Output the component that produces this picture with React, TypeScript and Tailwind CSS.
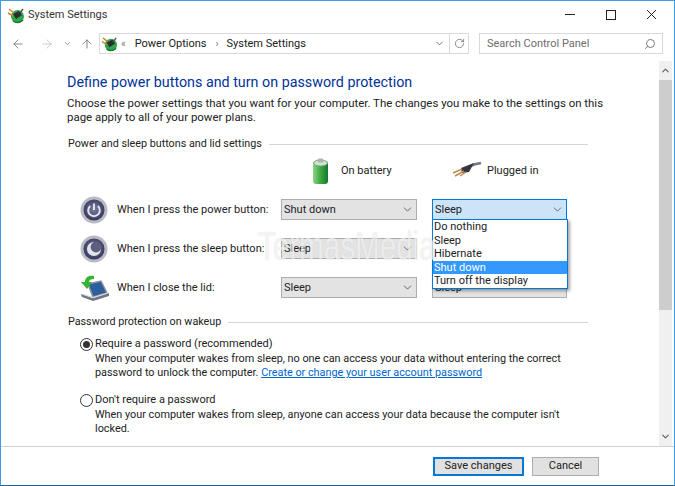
import { ChevronDown, Search, RotateCw, ArrowLeft, ArrowRight, ArrowUp } from 'lucide-react';

function PowerPlug({ size = 18 }: { size?: number }) {
  return (
    <svg width={size} height={size} viewBox="0 0 18 18" className="shrink-0">
      <circle cx="10.5" cy="10.5" r="6.5" fill="#2fa84a" />
      <path d="M6 8 L12 5 L15 9 L9 13 Z" fill="#2b2e33" />
      <path d="M2 3 L7 7 M1 7 L6 10" stroke="#c8873a" strokeWidth="1.5" />
      <path d="M13 7 L16 3" stroke="#555" strokeWidth="1.5" />
      <path d="M6 15 Q11 18.5 16 14" stroke="#157a30" strokeWidth="1.5" fill="none" />
    </svg>
  );
}

function RoundButton({ sleep }: { sleep?: boolean }) {
  return (
    <svg width="28" height="28" viewBox="0 0 28 28" className="shrink-0">
      <defs>
        <radialGradient id={sleep ? 'rg2' : 'rg1'} cx="50%" cy="45%" r="55%">
          <stop offset="0%" stopColor="#7d7fa0" />
          <stop offset="100%" stopColor="#34375e" />
        </radialGradient>
      </defs>
      <circle cx="14" cy="14" r="13.5" fill="#b9bac2" />
      <circle cx="14" cy="14" r="10.5" fill={`url(#${sleep ? 'rg2' : 'rg1'})`} />
      {sleep ? (
        <>
          <circle cx="14" cy="14" r="7" fill="#e4e5ec" />
          <circle cx="16" cy="12" r="5.4" fill="#5c5f80" />
        </>
      ) : (
        <>
          <path d="M10.2 10 A5.8 5.8 0 1 0 17.8 10" fill="none" stroke="#e3e4ea" strokeWidth="2" />
          <path d="M14 7.5 V14" stroke="#e3e4ea" strokeWidth="2" />
        </>
      )}
    </svg>
  );
}

function LidIcon() {
  return (
    <svg width="30" height="28" viewBox="0 0 30 28" className="shrink-0">
      <path d="M8 10 L21 7 L27 19 L13 23 Z" fill="#2d5f9c" stroke="#8a929c" strokeWidth="1.5" />
      <path d="M1 20 L13 24 L29 19 L29 22 L13 27 L2 23 Z" fill="#6f767f" />
      <path d="M2 20 L13 23.5 L28 19" stroke="#d5d8dc" strokeWidth="1.2" fill="none" />
      <path d="M14 2 C8 1 5 4 5 8 L1 8 L7 15 L12 8 L9 8 C9 6 11 5 14 5 Z" fill="#35b52f" />
    </svg>
  );
}

function Battery() {
  return (
    <svg width="17" height="27" viewBox="0 0 17 27" className="shrink-0">
      <defs>
        <linearGradient id="bat" x1="0" x2="1" y1="0" y2="0">
          <stop offset="0%" stopColor="#8fd48a" />
          <stop offset="45%" stopColor="#42ac45" />
          <stop offset="100%" stopColor="#13792c" />
        </linearGradient>
      </defs>
      <rect x="1" y="3" width="15" height="23" rx="3" fill="url(#bat)" />
      <ellipse cx="8.5" cy="5" rx="7" ry="3" fill="#cfe6cc" stroke="#87a587" />
      <rect x="5.5" y="0.5" width="6" height="4" rx="1.5" fill="#aab5ab" />
    </svg>
  );
}

function Plug() {
  return (
    <svg width="30" height="20" viewBox="0 0 30 20" className="shrink-0">
      <path d="M14 7 L22 3.5 L29 2" stroke="#74777c" strokeWidth="2.5" fill="none" />
      <path d="M9 7 L22 2 L17 11 L10 12 Z" fill="#33363b" />
      <path d="M10 8 L1 12 M12 10 L3 15 M14 11 L8 15" stroke="#bd8a52" strokeWidth="1.5" />
    </svg>
  );
}

function Select({ value, active }: { value: string; active?: boolean }) {
  return (
    <div
      className={
        active
          ? 'w-full h-[21px] border border-[#0078d7] bg-[#cce4f7] flex items-center justify-between pl-[2px] pr-[2px]'
          : 'w-full h-[21px] border border-[#adadad] bg-[#e3e3e3] flex items-center justify-between pl-[2px] pr-[2px]'
      }
    >
      <span>{value}</span>
      <ChevronDown size={13} strokeWidth={1.4} className="text-[#444]" />
    </div>
  );
}

const rows = [
  { label: 'When I press the power button:', icon: <RoundButton />, battery: 'Shut down', plugged: 'Sleep', active: true },
  { label: 'When I press the sleep button:', icon: <RoundButton sleep />, battery: 'Sleep', plugged: 'Sleep' },
  { label: 'When I close the lid:', icon: <LidIcon />, battery: 'Sleep', plugged: 'Sleep' },
];

const options = ['Do nothing', 'Sleep', 'Hibernate', 'Shut down', 'Turn off the display'];

function SectionTitle({ text }: { text: string }) {
  return (
    <div className="flex items-center gap-[7px] ml-[1px]">
      <span className="text-[10.75px]">{text}</span>
      <div className="flex-1 h-px bg-[#d5d5d5]" />
    </div>
  );
}

export default function App() {
  return (
    <div className="w-[675px] h-[486px] relative overflow-hidden bg-white border border-[#3d9be8] border-b-[#1a5f9e] flex flex-col text-[11px] leading-[14px] text-[#222] [font-family:Roboto,'Noto_Sans',sans-serif]">
      {/* title bar */}
      <div className="h-[27px] flex items-center pl-[6px] shrink-0">
        <PowerPlug />
        <span className="ml-[3px] text-[#333]">System Settings</span>
        <div className="ml-auto flex items-center pr-[2px] text-[#222]">
          <div className="w-[41px] flex justify-center"><div className="w-[10px] h-px bg-[#222]" /></div>
          <div className="w-[41px] flex justify-center"><div className="w-[10px] h-[10px] border border-[#222]" /></div>
          <div className="w-[41px] flex justify-center">
            <svg width="11" height="11" viewBox="0 0 11 11">
              <path d="M1 1 L10 10 M10 1 L1 10" stroke="#222" strokeWidth="1" />
            </svg>
          </div>
        </div>
      </div>

      {/* nav row */}
      <div className="h-[21px] mt-[5px] mb-[7px] flex items-center shrink-0">
        <div className="flex items-center pl-[10px] w-[98px] text-[#7d7d7d] shrink-0">
          <ArrowLeft size={14} strokeWidth={1.6} />
          <ArrowRight size={14} strokeWidth={1.6} className="ml-[15px] text-[#c9c9c9]" />
          <ChevronDown size={9} strokeWidth={2} className="ml-[9px]" />
          <ArrowUp size={14} strokeWidth={1.6} className="ml-[8px]" />
        </div>
        <div className="w-[370px] h-[21px] border border-[#d9d9d9] flex items-center shrink-0">
          <div className="ml-[1px]"><PowerPlug size={17} /></div>
          <span className="ml-[3px] text-[#777] text-[10px]">«</span>
          <span className="ml-[9px]">Power Options</span>
          <span className="ml-[9px] text-[#777] text-[10px]">›</span>
          <span className="ml-[8px]">System Settings</span>
          <ChevronDown size={11} strokeWidth={1.8} className="ml-auto mr-[4px] text-[#555]" />
          <div className="w-[19px] h-full border-l border-[#d9d9d9] flex items-center justify-center">
            <RotateCw size={11} strokeWidth={1.6} className="text-[#666]" />
          </div>
        </div>
        <div className="ml-[10px] w-[184px] h-[21px] border border-[#d9d9d9] flex items-center justify-between pl-[7px] pr-[6px] text-[#6d6d6d]">
          <span>Search Control Panel</span>
          <Search size={12} strokeWidth={1.8} className="-scale-x-100" />
        </div>
      </div>

      {/* content */}
      <div className="flex-1 flex min-h-0">
        <div className="flex-1 pl-[66px] pr-[71px] pt-[11px] min-w-0 whitespace-nowrap">
          <h1 className="text-[14.3px] leading-[20px] text-[#003399] font-normal">
            Define power buttons and turn on password protection
          </h1>
          <p className="mt-[4px] text-[11.44px]">
            Choose the power settings that you want for your computer. The changes you make to the settings on this
            <br />
            page apply to all of your power plans.
          </p>
          <div className="mt-[13px]">
            <SectionTitle text="Power and sleep buttons and lid settings" />
          </div>

          <div className="flex mt-[5px] h-[30px] pl-[245px]">
            <div className="w-[140px] flex items-center gap-[12px]">
              <Battery />
              <span>On battery</span>
            </div>
            <div className="flex items-center gap-[5px]">
              <Plug />
              <span>Plugged in</span>
            </div>
          </div>

          <div className="mt-[13px] flex flex-col gap-[18px]">
            {rows.map((row) => (
              <div key={row.label} className="flex items-center h-[21px]">
                <div className="w-[37px] ml-[13px] flex items-center shrink-0">{row.icon}</div>
                <span className="w-[164px] shrink-0">{row.label}</span>
                <div className="w-[136px] shrink-0">
                  <Select value={row.battery} />
                </div>
                <div className="w-[135px] ml-[15px] shrink-0">
                  <Select value={row.plugged} active={row.active} />
                </div>
              </div>
            ))}
          </div>

          <div className="mt-[17px]">
            <SectionTitle text="Password protection on wakeup" />
          </div>

          <div className="mt-[8px] ml-[13px] flex flex-col gap-[13px]">
            <div>
              <div className="flex items-center gap-[2px]">
                <span className="w-[13px] h-[13px] rounded-full border border-[#333] flex items-center justify-center">
                  <span className="w-[7px] h-[7px] rounded-full bg-[#333]" />
                </span>
                <span>Require a password (recommended)</span>
              </div>
              <p className="ml-[15px] mt-[1px] text-[10.85px]">
                When your computer wakes from sleep, no one can access your data without entering the correct
                <br />
                password to unlock the computer. <span className="text-[#0066cc] underline">Create or change your user account password</span>
              </p>
            </div>
            <div>
              <div className="flex items-center gap-[2px]">
                <span className="w-[13px] h-[13px] rounded-full border border-[#333]" />
                <span>Don't require a password</span>
              </div>
              <p className="ml-[15px] mt-[1px] text-[10.85px]">
                When your computer wakes from sleep, anyone can access your data because the computer isn't
                <br />
                locked.
              </p>
            </div>
          </div>
        </div>

        {/* scrollbar */}
        <div className="w-[13px] mr-[2px] bg-[#f0f0f0] flex flex-col shrink-0">
          <div className="h-[19px] flex items-center justify-center text-[#606060]">
            <ChevronDown size={11} strokeWidth={2.5} className="rotate-180" />
          </div>
          <div className="h-[230px] bg-[#cdcdcd]" />
          <div className="mt-auto h-[19px] flex items-center justify-center text-[#606060]">
            <ChevronDown size={11} strokeWidth={2.5} />
          </div>
        </div>
      </div>

      {/* footer */}
      <div className="h-[39px] border-t border-[#d0d0d0] flex items-center justify-end pr-[75px] gap-[8px] shrink-0">
        <button className="w-[91px] h-[19px] border-2 border-[#0078d7] bg-[#e1e1e1]">Save changes</button>
        <button className="w-[67px] h-[19px] border border-[#adadad] bg-[#e1e1e1]">Cancel</button>
      </div>

      {/* open dropdown list */}
      <div className="absolute left-[431px] top-[218px] w-[136px] border border-[#0078d7] bg-white shadow-[2px_2px_3px_rgba(0,0,0,0.35)] flex flex-col leading-[13.5px]">
        {options.map((o) => (
          <div key={o} className={o === 'Shut down' ? 'bg-[#3399ff] text-white pl-[1px]' : 'pl-[1px]'}>{o}</div>
        ))}
      </div>

      {/* watermark */}
      <div className="absolute left-[257px] top-[223px] text-[40px] leading-[44px] text-white/70 [font-family:'Liberation_Sans',sans-serif] [text-shadow:0_0_1px_rgba(0,0,0,0.15)] scale-x-[0.74] origin-left whitespace-nowrap">
        TermasMedia
      </div>
    </div>
  );
}
